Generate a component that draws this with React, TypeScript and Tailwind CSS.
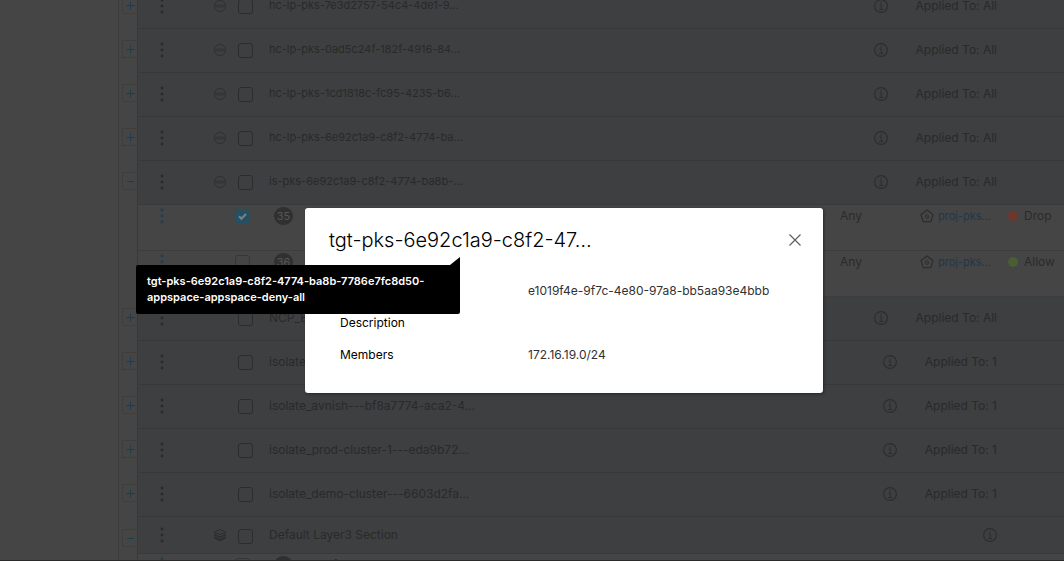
import { useState } from "react";

type Section = {
  kind: "section";
  name: string;
  icon?: "system" | "layers";
  applied?: string;
  open?: boolean;
  short?: boolean;
};

type Rule = {
  kind: "rule";
  id: string;
  checked?: boolean;
  name?: string;
  service?: string;
  scope?: string;
  action: "Drop" | "Allow";
};

const rows: (Section | Rule)[] = [
  { kind: "section", name: "hc-lp-pks-7e3d2757-54c4-4de1-9…", icon: "system", applied: "All" },
  { kind: "section", name: "hc-lp-pks-0ad5c24f-182f-4916-84…", icon: "system", applied: "All" },
  { kind: "section", name: "hc-lp-pks-1cd1818c-fc95-4235-b6…", icon: "system", applied: "All" },
  { kind: "section", name: "hc-lp-pks-6e92c1a9-c8f2-4774-ba…", icon: "system", applied: "All" },
  { kind: "section", name: "is-pks-6e92c1a9-c8f2-4774-ba8b-…", icon: "system", applied: "All", open: true },
  { kind: "rule", id: "35", checked: true, service: "Any", scope: "proj-pks…", action: "Drop" },
  { kind: "rule", id: "36", service: "Any", scope: "proj-pks…", action: "Allow" },
  { kind: "section", name: "NCP_E", applied: "All" },
  { kind: "section", name: "isolate_", applied: "1" },
  { kind: "section", name: "isolate_avnish---bf8a7774-aca2-4…", applied: "1" },
  { kind: "section", name: "isolate_prod-cluster-1---eda9b72…", applied: "1" },
  { kind: "section", name: "isolate_demo-cluster---6603d2fa…", applied: "1" },
  { kind: "section", name: "Default Layer3 Section", icon: "layers", open: true, short: true },
  { kind: "rule", id: "2", name: "Default Layer3 Rule", action: "Allow" },
];

function Dots({ blue }: { blue?: boolean }) {
  return (
    <button type="button" aria-label="Actions" className={blue ? "text-[#1f3e50]" : "text-[#292a2b]"}>
      <svg width="4" height="16" viewBox="0 0 4 16" fill="currentColor" className="block">
        <circle cx="2" cy="2" r="1.4" />
        <circle cx="2" cy="8" r="1.4" />
        <circle cx="2" cy="14" r="1.4" />
      </svg>
    </button>
  );
}

function Check({ label, checked = false, light }: { label: string; checked?: boolean; light?: boolean }) {
  const [on, setOn] = useState(checked);
  return (
    <span className="relative block size-[15px] shrink-0">
      <input
        type="checkbox"
        aria-label={label}
        checked={on}
        onChange={(e) => setOn(e.target.checked)}
        className={
          "block size-[15px] appearance-none rounded-[3px] border checked:border-[#245062] checked:bg-[#245062] " +
          (light ? "border-[#363636]" : "border-[#2b2c2d]")
        }
      />
      {on && (
        <svg viewBox="0 0 15 15" className="pointer-events-none absolute inset-0 size-[15px]" fill="none" stroke="#76848a" strokeWidth="2">
          <path d="M4 7.2l2.400 2.500L11 5" />
        </svg>
      )}
    </span>
  );
}

function SystemIcon() {
  return (
    <svg width="14" height="14" viewBox="0 0 14 14" fill="none" className="block text-[#303131]">
      <circle cx="7" cy="7" r="5.700" stroke="currentColor" />
      <path d="M2.500 5.500h9v3h-9z" fill="currentColor" opacity="0.6" />
      <path d="M3 7h8" stroke="#3a3b3b" strokeDasharray="1.5 1" />
    </svg>
  );
}

function LayersIcon() {
  return (
    <svg width="14" height="14" viewBox="0 0 14 14" className="block">
      <path d="M7 1.500l5.500 2.600L7 6.700 1.500 4.100z" fill="none" stroke="#2c2d2d" />
      <path d="M1 5.500l6 2.900 6-2.900v1.700l-6 2.900-6-2.900z" fill="#2c2d2d" />
      <path d="M1 8.300l6 2.600 6-2.600v2l-6 3-6-3z" fill="#2c2d2d" />
    </svg>
  );
}

function InfoButton() {
  return (
    <button type="button" aria-label="Information">
      <svg width="14" height="14" viewBox="0 0 14 14" fill="none" stroke="#2c2d2e" className="block">
        <circle cx="7" cy="7" r="6.400" strokeWidth="1.1" />
        <path d="M5.500 6h1.800v4.200M5.100 10.500h4" />
        <path d="M6.300 3.800h1.400" strokeWidth="1.3" />
      </svg>
    </button>
  );
}

function GroupIcon() {
  return (
    <svg width="14" height="14" viewBox="0 0 14 14" fill="none" stroke="#2d2d2d" className="block shrink-0">
      <path d="M7 1l6 4.600-2.200 7H3.200L1 5.600z" strokeWidth="1.2" strokeLinejoin="round" />
      <path d="M8.600 6.300C8 5.700 7.300 5.600 6.700 5.700 5.800 5.900 5.300 6.600 5.300 7.500s.7 1.800 1.700 1.800 1.600-.5 1.700-1.600H7.200" />
    </svg>
  );
}

function SectionRow({ row }: { row: Section }) {
  return (
    <div className={"flex " + (row.short ? "h-[37px]" : "h-11")}>
      <div className={"flex w-[18px] shrink-0 items-center justify-end " + (row.short ? "pt-1" : "pb-1")}>
        <button
          type="button"
          aria-label={row.open ? "Collapse" : "Expand"}
          className="flex h-[18px] w-[15px] items-center justify-center rounded-l-xs border border-r-0 border-[#3e3e3e] pt-px pl-px"
        >
          <svg width="9" height="9" viewBox="0 0 9 9" stroke="#1c3c50" className="block shrink-0">
            <path d={row.open ? "M1 4.500h7" : "M.5 4.500h8M4.500 .5v8"} />
          </svg>
        </button>
      </div>
      <div
        className={
          "flex min-w-0 flex-1 items-center border-b border-l border-b-[#38393a] border-l-[#36383a] bg-[#3e3f40] pr-[67px] pl-[22px] " +
          (row.short ? "" : "pb-0.5")
        }
      >
        <Dots />
        <span className="ml-12 flex w-6 shrink-0 justify-start pl-[1px]">
          {row.icon === "system" && <SystemIcon />}
          {row.icon === "layers" && <LayersIcon />}
        </span>
        <span className="ml-0.5 pt-0.5">
          <Check label={row.name} />
        </span>
        <span className={"ml-4 whitespace-nowrap " + (row.icon === "system" ? "text-[11px]" : "")}>{row.name}</span>
        <span className="ml-auto flex items-center gap-7 whitespace-nowrap">
          <InfoButton />
          {row.applied && <span>Applied To: {row.applied}</span>}
        </span>
      </div>
    </div>
  );
}

function RuleRow({ row }: { row: Rule }) {
  return (
    <div className="flex h-[46px]">
      <div className="w-[18px] shrink-0" />
      <div className="flex min-w-0 flex-1 items-start border-b border-l border-b-[#3c3d3d] border-l-[#36383a] bg-[#454545] pt-0.5 pl-[22px] text-[#2b2b2b]">
        <div className="flex h-[18px] min-w-0 flex-1 items-center">
          <Dots blue />
          <span className="ml-[71px]">
            <Check label={"Rule " + row.id} checked={row.checked} light />
          </span>
          <span className="ml-6 flex h-[18px] w-[19px] shrink-0 items-center justify-center rounded-full bg-[#303030] text-[11px] text-[#565656]">
            {row.id}
          </span>
          <span className="ml-6 whitespace-nowrap">{row.name}</span>
        </div>
        <div className="flex h-[18px] w-[224px] shrink-0 items-center whitespace-nowrap">
          <span className="w-20">{row.service}</span>
          <span className="flex w-[88px] items-center gap-1">
            {row.scope && (
              <>
                <GroupIcon />
                <a href="#group" className="text-[11px] text-[#1d394a]">
                  {row.scope}
                </a>
              </>
            )}
          </span>
          <span className="flex items-center gap-1.5">
            <span
              className={"size-2.5 rounded-full " + (row.action === "Drop" ? "bg-[#6f362c]" : "bg-[#4a5e33]")}
            />
            {row.action}
          </span>
        </div>
      </div>
    </div>
  );
}

function GroupDialog() {
  return (
    <div className="absolute inset-0 flex items-center justify-center pt-[41px] pl-16">
      <section
        role="dialog"
        aria-labelledby="dialog-title"
        className="relative w-[518px] rounded-[3px] bg-white px-6 pt-4 pb-[22px] text-[#313131] shadow-[1px_1px_3px_rgba(0,0,0,0.4)]"
      >
        <header className="flex h-8 items-center justify-between">
          <h2 id="dialog-title" className="text-xl font-light text-black">
            tgt-pks-6e92c1a9-c8f2-47…
          </h2>
          <button type="button" aria-label="Close" className="-mr-1.5 p-1">
            <svg width="12" height="12" viewBox="0 0 12 12" stroke="#5a5a5a" strokeWidth="1.1" className="block">
              <path d="M.5.5l11 11M11.500.5l-11 11" />
            </svg>
          </button>
        </header>
        <dl className="mt-[19px] grid grid-cols-[188px_1fr] pl-[11px] leading-8">
          <dt />
          <dd>e1019f4e-9f7c-4e80-97a8-bb5aa93e4bbb</dd>
          <dt className="text-black">Description</dt>
          <dd />
          <dt className="text-black">Members</dt>
          <dd>172.16.19.0/24</dd>
        </dl>
        <div
          role="tooltip"
          className="absolute top-[57px] right-[363px] w-[324px] rounded-[2px] rounded-tr-none bg-black px-[11px] pt-2 pb-[9px] text-[11px] leading-4 font-semibold text-white"
        >
          <svg width="10" height="8" viewBox="0 0 10 8" className="absolute right-0 bottom-full block">
            <path d="M10 0v8H0z" />
          </svg>
          tgt-pks-6e92c1a9-c8f2-4774-ba8b-7786e7fc8d50-
          <br />
          appspace-appspace-deny-all
        </div>
      </section>
    </div>
  );
}

export default function App() {
  return (
    <div className="relative h-screen overflow-hidden border-b border-[#2a2a2a] bg-[#454545] font-['Inter',sans-serif] text-xs text-[#292a2a]">
      <main className="-mt-[15px] ml-[118px] border-l border-[#3c3c3c]">
        {rows.map((row, i) =>
          row.kind === "section" ? <SectionRow key={i} row={row} /> : <RuleRow key={i} row={row} />
        )}
      </main>
      <GroupDialog />
    </div>
  );
}
